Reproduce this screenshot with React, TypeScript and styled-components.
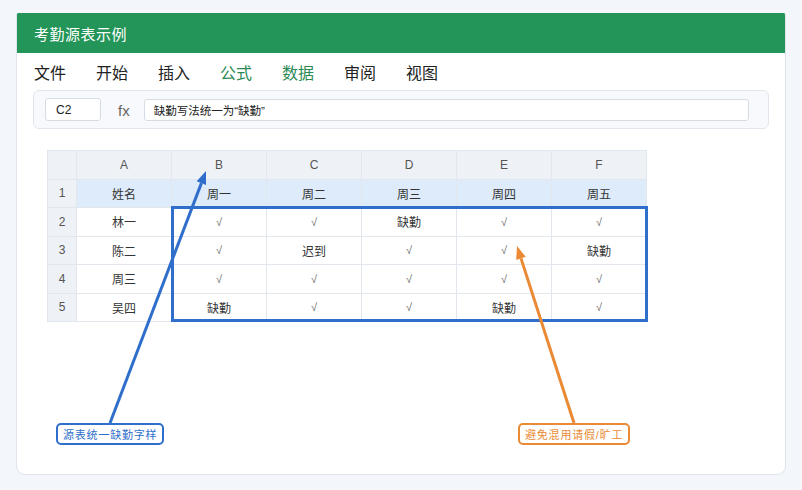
import React from "react";
import styled, { createGlobalStyle } from "styled-components";

const GlobalStyle = createGlobalStyle`
    html, body {
        margin: 0;
        padding: 0;
        background: #f3f6fa;
        font-family: "Liberation Sans", "Noto Sans CJK SC", sans-serif;
    }
`;

const colors = {
    green: "#239558",
    menuGreen: "#2a8a55",
    blue: "#2f6fcb",
    orange: "#ea8a35",
    line: "#e2e7ee",
    headBg: "#eef2f7",
    rowOneBg: "#deebfa",
    text: "#333333",
};

const Page = styled.div`
    width: 802px;
    height: 490px;
    padding: 13px 16px 0 16px;
    box-sizing: border-box;
`;

const Card = styled.div`
    position: relative;
    width: 770px;
    height: 462px;
    background: #ffffff;
    border: 1px solid #dfe4ea;
    border-top: none;
    border-radius: 2px 2px 9px 9px;
    box-sizing: border-box;
    overflow: hidden;
`;

const TitleBar = styled.div`
    height: 40px;
    background: ${colors.green};
    color: #ffffff;
    font-size: 15px;
    display: flex;
    align-items: center;
    padding-left: 17px;
    letter-spacing: 0.5px;
`;

const Menu = styled.div`
    display: flex;
    gap: 30px;
    padding: 10px 0 5px 17px;
    font-size: 16px;
    line-height: 22px;
`;

const MenuItem = styled.span<{ $active?: boolean }>`
    color: ${({ $active }) => ($active ? colors.menuGreen : "#222222")};
`;

const FormulaBar = styled.div`
    margin: 0 16px 0 16px;
    height: 39px;
    box-sizing: border-box;
    background: #f7f9fc;
    border: 1px solid #e1e6ed;
    border-radius: 6px;
    display: flex;
    align-items: center;
    padding: 0 19px 0 11px;
`;

const NameBox = styled.div`
    width: 56px;
    height: 23px;
    box-sizing: border-box;
    background: #ffffff;
    border: 1px solid #d6dce4;
    border-radius: 3px;
    font-size: 12px;
    color: #222;
    display: flex;
    align-items: center;
    padding-left: 10px;
`;

const Fx = styled.span`
    font-size: 15px;
    color: #666;
    margin: 2px 14px 0 17px;
`;

const FormulaInput = styled.div`
    flex: 1;
    height: 22px;
    box-sizing: border-box;
    background: #ffffff;
    border: 1px solid #d6dce4;
    border-radius: 3px;
    font-size: 11.5px;
    color: #222;
    display: flex;
    align-items: center;
    padding-left: 9px;
`;

const SheetArea = styled.div`
    padding: 21px 0 0 30px;
`;

const SheetWrap = styled.div`
    position: relative;
    width: 600px;
`;

const Grid = styled.div`
    display: grid;
    grid-template-columns: 29px repeat(6, 95px);
    grid-auto-rows: 28.5px;
    border-top: 1px solid ${colors.line};
    border-left: 1px solid ${colors.line};
    width: max-content;
`;

const Cell = styled.div<{ $kind: "corner" | "colHead" | "rowHead" | "title" | "body" }>`
    display: flex;
    align-items: center;
    justify-content: center;
    border-right: 1px solid ${colors.line};
    border-bottom: 1px solid ${colors.line};
    font-size: 12px;
    color: ${({ $kind }) => ($kind === "rowHead" || $kind === "colHead" ? "#555" : colors.text)};
    background: ${({ $kind }) =>
        $kind === "title" ? colors.rowOneBg : $kind === "body" ? "#ffffff" : colors.headBg};
`;

const Check = styled.span`
    font-size: 11px;
    color: #666;
`;

const Selection = styled.div`
    position: absolute;
    left: 124px;
    top: 56px;
    width: 477px;
    height: 116px;
    box-sizing: border-box;
    border: 3px solid ${colors.blue};
    pointer-events: none;
`;

const Overlay = styled.svg`
    position: absolute;
    left: 0;
    top: 0;
    pointer-events: none;
`;

const Note = styled.div<{ $color: string; $left: number }>`
    position: absolute;
    top: 410px;
    left: ${({ $left }) => $left}px;
    height: 22px;
    box-sizing: border-box;
    padding: 0 5px;
    display: flex;
    align-items: center;
    background: #ffffff;
    border: 2px solid ${({ $color }) => $color};
    border-radius: 5px;
    color: ${({ $color }) => $color};
    font-size: 11px;
    letter-spacing: 0.8px;
`;

const menu = [
    { label: "文件" },
    { label: "开始" },
    { label: "插入" },
    { label: "公式", active: true },
    { label: "数据", active: true },
    { label: "审阅" },
    { label: "视图" },
];

const cols = ["A", "B", "C", "D", "E", "F"];
const rows = [
    ["姓名", "周一", "周二", "周三", "周四", "周五"],
    ["林一", "√", "√", "缺勤", "√", "√"],
    ["陈二", "√", "迟到", "√", "√", "缺勤"],
    ["周三", "√", "√", "√", "√", "√"],
    ["吴四", "缺勤", "√", "√", "缺勤", "√"],
];

const App = () => {
    return (
        <>
            <GlobalStyle />
            <Page>
                <Card>
                    <TitleBar>考勤源表示例</TitleBar>
                    <Menu>
                        {menu.map((m) => (
                            <MenuItem key={m.label} $active={m.active}>
                                {m.label}
                            </MenuItem>
                        ))}
                    </Menu>
                    <FormulaBar>
                        <NameBox>C2</NameBox>
                        <Fx>fx</Fx>
                        <FormulaInput>缺勤写法统一为“缺勤”</FormulaInput>
                    </FormulaBar>
                    <SheetArea>
                        <SheetWrap>
                            <Grid>
                                <Cell $kind="corner" />
                                {cols.map((c) => (
                                    <Cell key={c} $kind="colHead">
                                        {c}
                                    </Cell>
                                ))}
                                {rows.map((row, r) => (
                                    <React.Fragment key={r}>
                                        <Cell $kind="rowHead">{r + 1}</Cell>
                                        {row.map((v, c) => (
                                            <Cell key={c} $kind={r === 0 ? "title" : "body"}>
                                                {v === "√" ? <Check>√</Check> : v}
                                            </Cell>
                                        ))}
                                    </React.Fragment>
                                ))}
                            </Grid>
                            <Selection />
                        </SheetWrap>
                    </SheetArea>

                    {/* callout arrows */}
                    <Overlay width="770" height="462" viewBox="0 0 770 462">
                        <line x1="93" y1="410" x2="184.4" y2="170.1" stroke={colors.blue} strokeWidth="3" />
                        <polygon points="189,158 189,171.9 179.7,168.3" fill={colors.blue} />
                        <line x1="557" y1="410" x2="504" y2="245.4" stroke={colors.orange} strokeWidth="3" />
                        <polygon points="500,233 508.75,243.85 499.23,246.91" fill={colors.orange} />
                    </Overlay>
                    <Note $color={colors.blue} $left={39}>
                        源表统一缺勤字样
                    </Note>
                    <Note $color={colors.orange} $left={501}>
                        避免混用请假/旷工
                    </Note>
                </Card>
            </Page>
        </>
    );
};

export default App;
